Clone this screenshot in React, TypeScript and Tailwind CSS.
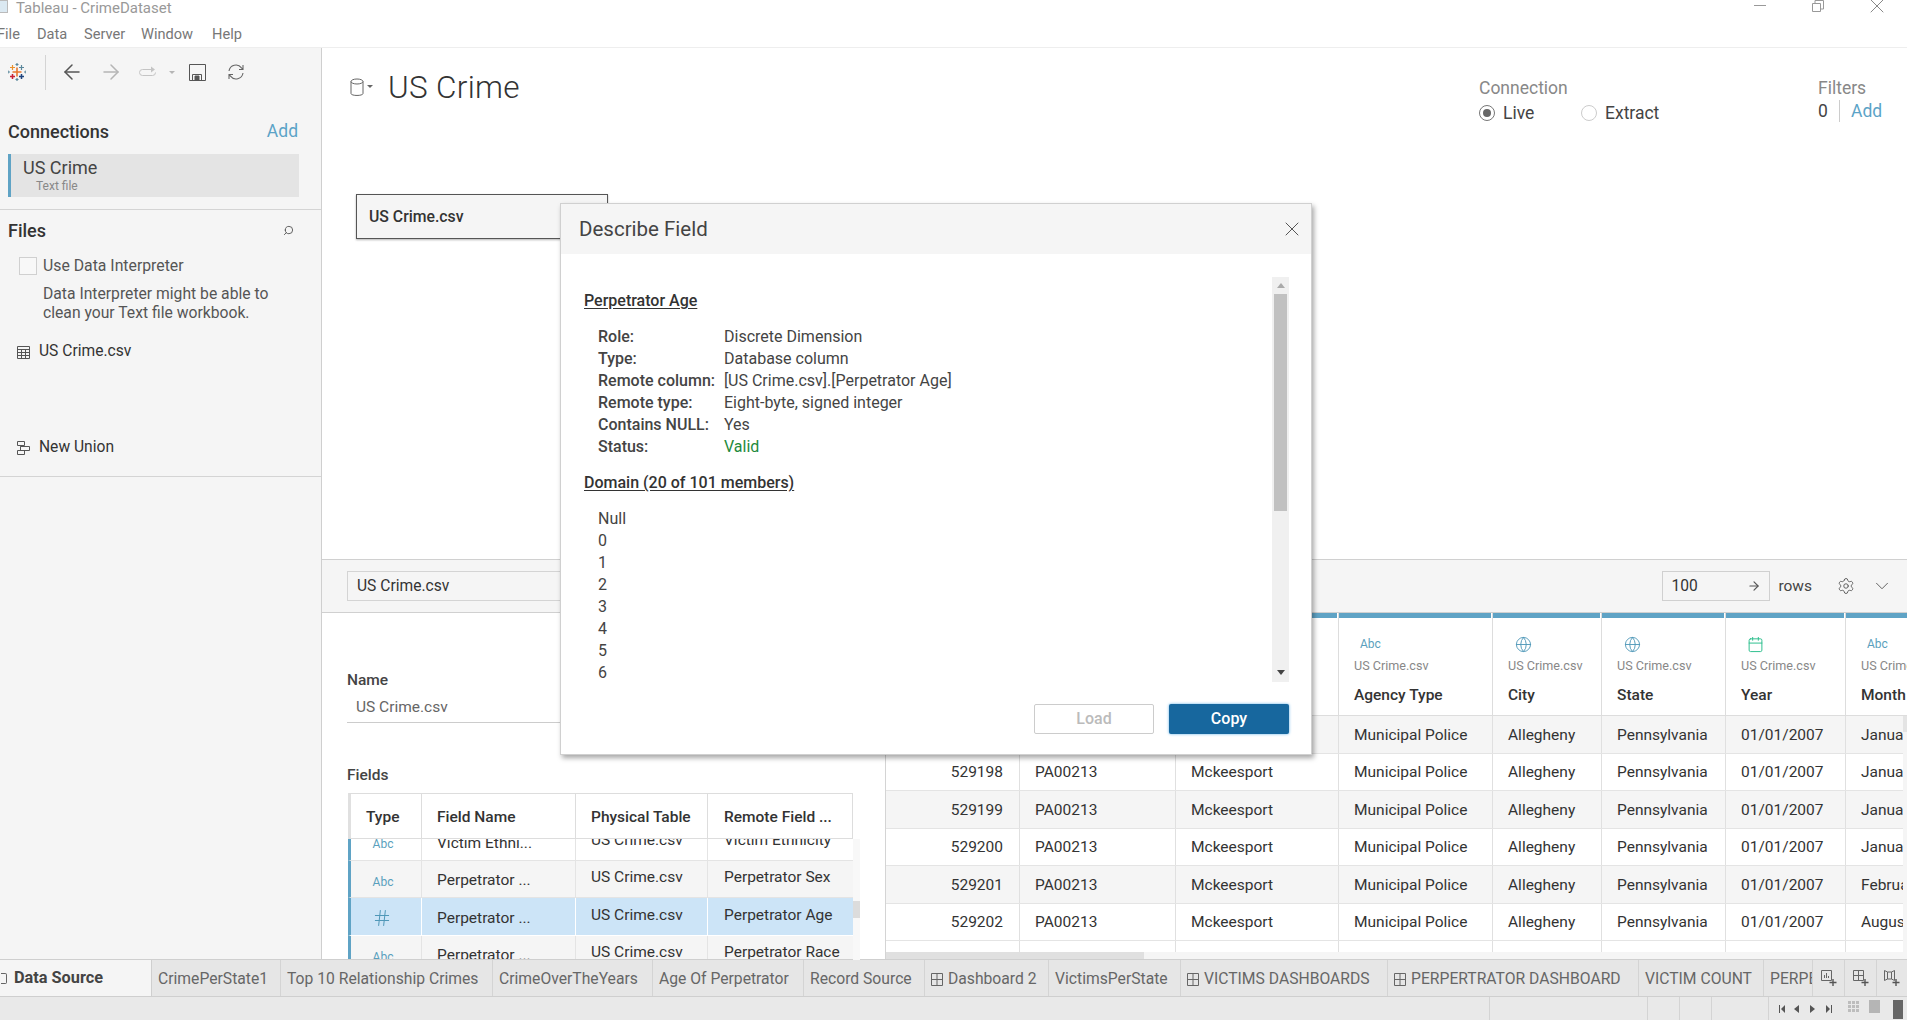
import { ArrowLeft, ArrowRight, Calendar, ChevronDown, Globe, Hash, Search, Settings, X } from "lucide-react";

const rows = [
  { id: "529197", code: "PA00213", name: "Mckeesport", month: "January" },
  { id: "529198", code: "PA00213", name: "Mckeesport", month: "January" },
  { id: "529199", code: "PA00213", name: "Mckeesport", month: "January" },
  { id: "529200", code: "PA00213", name: "Mckeesport", month: "January" },
  { id: "529201", code: "PA00213", name: "Mckeesport", month: "February" },
  { id: "529202", code: "PA00213", name: "Mckeesport", month: "August" },
];

const fields = [
  { type: "Abc", name: "Victim Ethni...", remote: "Victim Ethnicity", bg: "bg-white" },
  { type: "Abc", name: "Perpetrator ...", remote: "Perpetrator Sex", bg: "bg-[#f5f5f5]" },
  { type: "#", name: "Perpetrator ...", remote: "Perpetrator Age", bg: "bg-[#cce4f7]" },
  { type: "Abc", name: "Perpetrator ...", remote: "Perpetrator Race", bg: "bg-[#f5f5f5]" },
];

const details = [
  ["Role:", "Discrete Dimension"],
  ["Type:", "Database column"],
  ["Remote column:", "[US Crime.csv].[Perpetrator Age]"],
  ["Remote type:", "Eight-byte, signed integer"],
  ["Contains NULL:", "Yes"],
  ["Status:", "Valid"],
];

const members = ["Null", "0", "1", "2", "3", "4", "5", "6"];

const tabs = [
  { label: "CrimePerState1", w: "w-[129px]" },
  { label: "Top 10 Relationship Crimes", w: "w-[212px]" },
  { label: "CrimeOverTheYears", w: "w-[160px]" },
  { label: "Age Of Perpetrator", w: "w-[151px]" },
  { label: "Record Source", w: "w-[121px]" },
  { label: "Dashboard 2", w: "w-[124px]", dash: true },
  { label: "VictimsPerState", w: "w-[132px]" },
  { label: "VICTIMS DASHBOARDS", w: "w-[207px]", dash: true },
  { label: "PERPERTRATOR DASHBOARD", w: "w-[251px]", dash: true },
  { label: "VICTIM COUNT", w: "w-[125px]" },
  { label: "PERPETRATOR", w: "w-[49px]" },
];

const TableauLogo = () => (
  <svg width="18" height="18" viewBox="0 0 18 18" strokeWidth="1.2" fill="none">
    <path d="M9 4.5v9M4.5 9h9" stroke="#e8762d" strokeWidth="1.6" />
    <path d="M13.5 2v5M11 4.5h5" stroke="#5b879b" />
    <path d="M4.5 2v5M2 4.5h5" stroke="#eb912c" />
    <path d="M13.5 11v5M11 13.5h5" stroke="#1f447e" strokeWidth="1.5" />
    <path d="M4.5 11v5M2 13.5h5" stroke="#c72037" strokeWidth="1.5" />
    <path d="M9 0v3M7.5 1.5h3M9 15v3M7.5 16.5h3M0 7.5v3M0 9h2M16 9h2M18 7.5v3" stroke="#59879b" />
  </svg>
);

const SaveIcon = () => (
  <svg width="17" height="17" viewBox="0 0 17 17" fill="none" stroke="#555">
    <path d="M.5.5h16v16H.5z" />
    <path d="M3.5 16.5v-6h9v6" />
    <path d="M6 12h4v4H6z" fill="#555" />
  </svg>
);

const RefreshIcon = () => (
  <svg width="18" height="18" viewBox="0 0 18 18" fill="none" stroke="#666" strokeWidth="1.1">
    <path d="M2 8a7 7 0 0 1 12.5-3.2L16 6.5M16 2v4.5h-4" />
    <path d="M16 10a7 7 0 0 1-12.5 3.2L2 11.5M2 16v-4.5h4" />
  </svg>
);

const LoopIcon = () => (
  <svg width="19" height="12" viewBox="0 0 19 12" fill="none" stroke="#c4c4c4">
    <path d="M14 3.5H3.5a3 3 0 0 0 0 6h10a3 3 0 0 0 3-3" />
    <path d="M12 .5v6l4-3z" fill="#c4c4c4" stroke="none" />
  </svg>
);

const DbIcon = () => (
  <svg width="14" height="19" viewBox="0 0 14 19" fill="none" stroke="#666">
    <path d="M1 3.5v12c0 2.6 12 2.6 12 0v-12" />
    <ellipse cx="7" cy="3.5" rx="6" ry="2.5" />
  </svg>
);

const GridIcon = () => (
  <svg width="13" height="13" viewBox="0 0 13 13" fill="none" stroke="#555">
    <path d="M.5.5h12v12H.5zM.5 3.5h12M.5 6.5h12M.5 9.5h12M4.5 3.5v9M8.5 3.5v9" />
  </svg>
);

const UnionIcon = () => (
  <svg width="13" height="14" viewBox="0 0 13 14" fill="none" stroke="#555">
    <path d="M.5.5h7v4h-7zM3.5 4.5v1M3.5 5.5h9v4h-9zM.5 9.5h7v4h-7z" />
  </svg>
);

const DashIcon = () => (
  <svg width="12" height="13" viewBox="0 0 12 13" fill="none" stroke="#666" className="shrink-0">
    <path d="M.5.5h11v12H.5zM6 .5v12M.5 6.5h11" />
  </svg>
);

const NewTabIcon = ({ kind }: { kind: string }) => (
  <svg width="16" height="17" viewBox="0 0 16 17" fill="none" stroke="#666">
    {kind === "sheet" && <path d="M.5.5h10v10H.5zM3.5 8V5M5.5 8V3M7.5 8V6" />}
    {kind === "dash" && <path d="M.5.5h10v10H.5zM5.5.5v10M.5 5.5h10" />}
    {kind === "story" && <path d="M.5.5l3 1.5h4l3-1.5v10l-3-1.5h-4l-3 1.5zM3.5 2v7M7.5 2v7" />}
    <path d="M12 9v7M8.5 12.5h7" strokeWidth="1.4" stroke="#555" />
  </svg>
);

const Divider = () => <div className="h-px bg-[#d4d4d4]" />;

function Sidebar() {
  return (
    <aside className="w-[322px] shrink-0 bg-[#f5f5f5] border-r border-[#cfcfcf] flex flex-col text-[#333]">
      <div className="h-[48px] flex items-center pl-[8px]">
        <TableauLogo />
        <div className="ml-[19px] w-px h-[35px] bg-[#d4d4d4]" />
        <ArrowLeft size={24} strokeWidth={1.5} className="ml-[14px] text-[#555]" />
        <ArrowRight size={24} strokeWidth={1.5} className="ml-[15px] text-[#b5b5b5]" />
        <div className="ml-[16px]">
          <LoopIcon />
        </div>
        <div className="ml-[11px] w-0 h-0 border-x-[3px] border-x-transparent border-t-[3px] border-t-[#b5b5b5]" />
        <div className="ml-[14px]">
          <SaveIcon />
        </div>
        <div className="ml-[21px]">
          <RefreshIcon />
        </div>
      </div>
      <div className="mt-[25px] px-[8px] h-[20px] flex items-center justify-between pr-[23px]">
        <span className="text-[18px] font-medium">Connections</span>
        <span className="text-[17.5px] text-[#5ba3c7]">Add</span>
      </div>
      <div className="mt-[13px] ml-[8px] mr-[22px] h-[43px] bg-[#e4e4e4] border-l-[3px] border-[#5fa3c5] pl-[12px] pt-[3px]">
        <div className="text-[18px] leading-[22px] text-[#444]">US Crime</div>
        <div className="text-[12px] leading-[14px] pl-[13px] text-[#888]">Text file</div>
      </div>
      <div className="mt-[12px]">
        <Divider />
      </div>
      <div className="mt-[10px] px-[8px] pr-[27px] h-[20px] flex items-center justify-between">
        <span className="text-[18px] font-medium">Files</span>
        <Search size={11} className="-scale-x-100 text-[#555]" />
      </div>
      <div className="mt-[16px] pl-[19px] flex items-center">
        <div className="w-[18px] h-[18px] bg-[#f8f8f8] border border-[#d0d0d0]" />
        <span className="ml-[6px] text-[15.8px] leading-[20px] text-[#555]">Use Data Interpreter</span>
      </div>
      <p className="mt-[8px] pl-[43px] text-[15.7px] leading-[19px] text-[#555]">
        Data Interpreter might be able to
        <br />
        clean your Text file workbook.
      </p>
      <div className="mt-[20px] pl-[17px] flex items-center gap-[9px] h-[20px]">
        <GridIcon />
        <span className="text-[15.6px] text-[#333]">US Crime.csv</span>
      </div>
      <div className="mt-[76px] pl-[17px] flex items-center gap-[9px] h-[20px]">
        <UnionIcon />
        <span className="text-[15.6px] text-[#333]">New Union</span>
      </div>
      <div className="mt-[18px]">
        <Divider />
      </div>
    </aside>
  );
}

function Canvas() {
  return (
    <section className="flex-1 flex flex-col min-h-0">
      <div className="h-[146px] flex items-start shrink-0">
        <div className="ml-[28px] mt-[19px] flex items-center h-[40px]">
          <DbIcon />
          <div className="ml-[3px] -mt-[2px] w-0 h-0 border-x-[3px] border-x-transparent border-t-[3px] border-t-[#666]" />
          <h1 className="ml-[15px] pt-[2px] text-[31.5px] font-light text-[#333] tracking-[0.3px]">US Crime</h1>
        </div>
        <div className="ml-auto w-[339px] mt-[30px]">
          <div className="text-[17.5px] leading-[20px] text-[#888]">Connection</div>
          <div className="mt-[5px] flex items-center text-[17.5px] leading-[20px] text-[#444]">
            <div className="w-[16px] h-[16px] rounded-full border border-[#777] flex items-center justify-center">
              <div className="w-[8px] h-[8px] rounded-full bg-[#666]" />
            </div>
            <span className="ml-[8px] w-[78px]">Live</span>
            <div className="w-[16px] h-[16px] rounded-full border border-[#ccc]" />
            <span className="ml-[8px]">Extract</span>
          </div>
        </div>
        <div className="w-[89px] mt-[30px]">
          <div className="text-[17.5px] leading-[20px] text-[#888]">Filters</div>
          <div className="mt-[2px] flex items-center text-[17.5px] h-[22px]">
            <span className="text-[#444] w-[21px]">0</span>
            <div className="w-px h-[22px] bg-[#ccc]" />
            <span className="ml-[11px] text-[#5ba3c7]">Add</span>
          </div>
        </div>
      </div>
      <div className="ml-[34px] w-[252px] h-[45px] bg-[#f5f5f5] border border-[#555] shadow-[0_1px_2px_rgba(0,0,0,0.3)] flex items-center pl-[12px] pt-[1px] text-[15.8px] font-medium text-[#333]">
        US Crime.csv
      </div>
    </section>
  );
}

function FieldsPanel() {
  const line = (sel: boolean) => (sel ? "border-white" : "border-[#e4e4e4]");
  return (
    <div className="w-[564px] shrink-0 border-r border-[#d4d4d4] pl-[25px] pt-[57px] text-[#333]">
      <div className="text-[15.5px] leading-[20px] font-medium text-[#444]">Name</div>
      <div className="mt-[7px] w-[513px] h-[26px] border-b border-[#ccc] pl-[9px] text-[15.5px] leading-[20px] text-[#666]">
        US Crime.csv
      </div>
      <div className="mt-[42px] text-[15.5px] leading-[20px] font-medium text-[#444]">Fields</div>
      <div className="mt-[8px] ml-px w-[512px]">
        <div className="relative z-10 h-[46px] w-[505px] flex bg-white border border-[#ddd] border-l-[3px] border-l-[#e0e0e0] text-[15.5px] font-medium items-center">
          <div className="w-[71px] pl-[15px] pt-[4px] h-full flex items-center border-r border-[#ddd]">Type</div>
          <div className="w-[154px] pl-[15px] pt-[4px] h-full flex items-center border-r border-[#ddd]">Field Name</div>
          <div className="w-[132px] pl-[15px] pt-[4px] h-full flex items-center border-r border-[#ddd]">Physical Table</div>
          <div className="flex-1 pl-[16px] pt-[4px] h-full flex items-center">Remote Field ...</div>
        </div>
        <div className="flex h-[121px] overflow-hidden">
          <div className="w-[505px] -mt-[16px]">
            {fields.map((f, i) => {
              const sel = f.type === "#";
              return (
                <div key={i} className={`h-[37.5px] flex border-b ${line(sel)} border-l-[3px] border-l-[#5fa3c5] text-[15.5px] ${f.bg}`}>
                  <div className={`w-[71px] flex items-center justify-center pt-[6px] pr-[6px] border-r ${line(sel)}`}>
                    {sel ? (
                      <Hash size={20} strokeWidth={1.2} className="text-[#4f97b8] -mt-[3px] mr-[2px]" />
                    ) : (
                      <span className="text-[12px] text-[#5a9fbd]">Abc</span>
                    )}
                  </div>
                  <div className={`w-[154px] pl-[15px] pt-[4px] flex items-center border-r ${line(sel)}`}>{f.name}</div>
                  <div className={`w-[132px] pl-[15px] pb-[2px] flex items-center border-r ${line(sel)}`}>US Crime.csv</div>
                  <div className="flex-1 pl-[16px] pb-[2px] flex items-center whitespace-nowrap">{f.remote}</div>
                </div>
              );
            })}
          </div>
          <div className="w-[7px] bg-[#f8f8f8] relative">
            <div className="mt-[62px] h-[17px] bg-[#dcdcdc]" />
          </div>
        </div>
      </div>
    </div>
  );
}

const gridCols = ["w-[134px]", "w-[156px]", "w-[163px]", "w-[154px]", "w-[109px]", "w-[124px]", "w-[120px]", "w-[120px]"];

const headers = [
  { icon: "#", name: "Record ID" },
  { icon: "Abc", name: "Agency Code" },
  { icon: "Abc", name: "Agency Name" },
  { icon: "Abc", name: "Agency Type" },
  { icon: "globe", name: "City" },
  { icon: "globe", name: "State" },
  { icon: "cal", name: "Year" },
  { icon: "Abc", name: "Month" },
];

function HeaderIcon({ icon }: { icon: string }) {
  if (icon === "globe") return <Globe size={17} strokeWidth={1.3} className="text-[#4f97b8] ml-[7px]" />;
  if (icon === "cal") return <Calendar size={17} strokeWidth={1.4} className="text-[#2fbf8f] ml-[6px]" />;
  if (icon === "#") return <Hash size={14} strokeWidth={1.3} className="text-[#4f97b8] ml-[8px]" />;
  return <span className="ml-[6px] text-[12px] text-[#5a9fbd]">Abc</span>;
}

function DataGrid() {
  return (
    <div className="flex-1 flex flex-col min-w-0 overflow-hidden text-[15.5px] text-[#333]">
      <div className="flex h-[103px] shrink-0 border-b border-[#ddd]">
        {headers.map((h, i) => (
          <div key={h.name} className={`${gridCols[i]} shrink-0 h-full border-r border-[#ddd] flex flex-col`}>
            <div className="h-[5px] bg-[#5fa3c5] border-r border-white" />
            <div className="h-[20px] mt-[16px] flex items-center pl-[15px]">
              <HeaderIcon icon={h.icon} />
            </div>
            <div className="mt-[3px] pl-[15px] text-[12.6px] leading-[18px] text-[#888] whitespace-nowrap">US Crime.csv</div>
            <div className="mt-[10px] pl-[15px] leading-[20px] font-medium whitespace-nowrap">{h.name}</div>
          </div>
        ))}
      </div>
      <div className="flex flex-1 min-h-0">
        <div className="flex-1 min-w-0 overflow-hidden flex flex-col">
          {rows.map((r, i) => {
            const cells = [r.id, r.code, r.name, "Municipal Police", "Allegheny", "Pennsylvania", "01/01/2007", r.month];
            return (
              <div key={r.id} className={`flex h-[37.5px] shrink-0 border-b border-[#e4e4e4] ${i % 2 === 0 ? "bg-[#f5f5f5]" : "bg-white"}`}>
                {cells.map((c, j) => (
                  <div key={j} className={`${gridCols[j]} shrink-0 border-r border-[#e0e0e0] pt-[2px] flex items-center whitespace-nowrap overflow-hidden ${j === 0 ? "justify-end pr-[16px]" : "pl-[15px]"}`}>
                    {c}
                  </div>
                ))}
              </div>
            );
          })}
          <div className="flex h-[11px] shrink-0">
            {gridCols.map((c, j) => (
              <div key={j} className={`${c} shrink-0 border-r border-[#e0e0e0]`} />
            ))}
          </div>
        </div>
        <div className="w-[4px] shrink-0 bg-[#f5f5f5]">
          <div className="h-[16px] bg-[#e4e4e4]" />
        </div>
      </div>
      <div className="h-[7px] shrink-0 bg-[#f5f5f5]">
        <div className="w-[258px] h-full bg-[#e0e0e0]" />
      </div>
    </div>
  );
}

function BottomPanel() {
  return (
    <section className="h-[400px] shrink-0 flex flex-col">
      <div className="h-[54px] shrink-0 bg-[#f5f5f5] border-y border-[#d0d0d0] flex items-center pl-[25px]">
        <div className="w-[400px] h-[30px] border border-[#d4d4d4] flex items-center pl-[9px] pt-[2px] text-[15.6px] text-[#333]">US Crime.csv</div>
        <div className="ml-auto w-[108px] h-[30px] border border-[#d0d0d0] flex items-center justify-between pl-[8px] pr-[8px] text-[15.6px] text-[#333]">
          <span className="pt-[1px]">100</span>
          <ArrowRight size={14} className="text-[#555]" />
        </div>
        <span className="ml-[8px] pt-[1px] text-[15.5px] text-[#444]">rows</span>
        <Settings size={18} strokeWidth={1.2} className="ml-[25px] text-[#555]" />
        <ChevronDown size={22} strokeWidth={1} className="ml-[16px] mr-[14px] text-[#555]" />
      </div>
      <div className="flex-1 flex min-h-0">
        <FieldsPanel />
        <DataGrid />
      </div>
    </section>
  );
}

function DescribeDialog() {
  return (
    <div className="absolute z-20 left-[560px] top-[203px] w-[752px] h-[552px] bg-white border border-[#d0d0d0] shadow-[2px_3px_5px_rgba(0,0,0,0.35)] flex flex-col text-[16px] text-[#444]">
      <div className="h-[50px] shrink-0 bg-[#f5f5f5] flex items-center justify-between pl-[18px] pr-[7px]">
        <span className="text-[20.5px] text-[#444]">Describe Field</span>
        <X size={24} strokeWidth={1} className="text-[#555]" />
      </div>
      <div className="flex mt-[23px] pr-[22px] h-[405px]">
        <div className="flex-1 pl-[23px] pt-[14px]">
          <div className="font-medium underline underline-offset-2 leading-[20px] text-[#333]">Perpetrator Age</div>
          <div className="mt-[15px] pl-[14px]">
            {details.map(([k, v]) => (
              <div key={k} className="flex h-[22px] items-center">
                <span className="w-[126px] font-medium text-[#444]">{k}</span>
                <span className={v === "Valid" ? "text-[#1e8a3c]" : "text-[#444]"}>{v}</span>
              </div>
            ))}
          </div>
          <div className="mt-[15px] font-medium underline underline-offset-2 leading-[20px] text-[#333]">Domain (20 of 101 members)</div>
          <div className="mt-[15px] pl-[14px]">
            {members.map((m) => (
              <div key={m} className="h-[22px] flex items-center">{m}</div>
            ))}
          </div>
        </div>
        <div className="w-[17px] bg-[#f0f0f0] flex flex-col items-center pt-[6px]">
          <div className="w-0 h-0 border-x-[4px] border-x-transparent border-b-[5px] border-b-[#aaa]" />
          <div className="mt-[6px] w-[13px] h-[217px] bg-[#c1c1c1]" />
          <div className="mt-auto mb-[7px] w-0 h-0 border-x-[4px] border-x-transparent border-t-[5px] border-t-[#444]" />
        </div>
      </div>
      <div className="mt-[22px] flex justify-end gap-[15px] pr-[22px]">
        <div className="w-[120px] h-[30px] border border-[#ccc] rounded-[2px] flex items-center justify-center font-medium text-[#bbb]">Load</div>
        <div className="w-[120px] h-[30px] bg-[#17679e] rounded-[2px] shadow-[0_0_3px_#5fb0e8] flex items-center justify-center font-medium text-white">Copy</div>
      </div>
    </div>
  );
}

function TabBar() {
  return (
    <div className="h-[38px] shrink-0 flex border-y border-[#cfcfcf] bg-[#e6e6e6] text-[15.7px] text-[#666] overflow-hidden">
      <div className="w-[152px] shrink-0 bg-[#f5f5f5] flex items-center pl-[1px] border-r border-[#cfcfcf]">
        <div className="w-[6px] h-[11px] border border-[#666] border-l-0 rounded-r-[2px]" />
        <span className="ml-[7px] pt-[1px] text-[16.3px] font-bold text-[#444]">Data Source</span>
      </div>
      {tabs.map((t) => (
        <div key={t.label} className={`${t.w} shrink-0 flex items-center gap-[5px] pl-[6px] pt-[2px] border-r border-[#d4d4d4] overflow-hidden whitespace-nowrap`}>
          {t.dash && <DashIcon />}
          {t.label}
        </div>
      ))}
      <div className="w-[32px] shrink-0 flex items-center justify-center border-r border-[#d4d4d4]">
        <NewTabIcon kind="sheet" />
      </div>
      <div className="w-[32px] shrink-0 flex items-center justify-center border-r border-[#d4d4d4]">
        <NewTabIcon kind="dash" />
      </div>
      <div className="flex-1 flex items-center justify-center">
        <NewTabIcon kind="story" />
      </div>
    </div>
  );
}

function StatusBar() {
  return (
    <div className="flex-1 bg-[#e9e9e9] flex">
      <div className="w-[1490px] shrink-0 border-r border-[#d4d4d4]" />
      <div className="w-[158px] shrink-0 border-r border-[#d4d4d4]" />
      <div className="w-[32px] shrink-0 border-r border-[#d4d4d4]" />
      <div className="w-[32px] shrink-0 border-r border-[#d4d4d4]" />
      <div className="w-[57px] shrink-0 border-r border-[#d4d4d4]" />
      <div className="flex-1 flex items-center pl-[9px]">
        <svg width="56" height="10" viewBox="0 0 56 10" fill="#555">
          <path d="M1 1h1v8H1zM7 1v8L3 5zM21 1v8l-5-4zM32 1v8l5-4zM48 1v8l4-4zM53 1h1v8h-1z" />
        </svg>
        <svg width="60" height="22" viewBox="0 0 60 22" className="ml-[14px]">
          <path d="M0 3h3v3H0zM4 3h3v3H4zM8 3h3v3H8zM0 7h3v3H0zM4 7h3v3H4zM8 7h3v3H8zM0 11h3v3H0zM4 11h3v3H4zM8 11h3v3H8z" fill="#bdbdbd" />
          <path d="M21 2h11v13H21z" fill="#b5b5b5" />
          <path d="M45 2h10v19H45z" fill="#666" />
        </svg>
      </div>
    </div>
  );
}

export default function App() {
  return (
    <div className="relative w-[1907px] h-[1020px] overflow-hidden bg-white flex flex-col [font-family:Roboto,sans-serif]">
      <div className="h-[47px] shrink-0 relative text-[#888]">
        <div className="h-[15px] pl-[16px] flex items-center text-[15px] pt-[1px] text-[#999]">
          <div className="absolute -left-[3px] top-0 w-[11px] h-[13px] border border-[#bbb] bg-[#dbe9f2]" />
          Tableau - CrimeDataset
        </div>
        <nav className="mt-[10px] flex h-[20px] items-center text-[14.6px] text-[#777] -ml-[3px]">
          <span className="w-[40px]">File</span>
          <span className="w-[47px]">Data</span>
          <span className="w-[57px]">Server</span>
          <span className="w-[71px]">Window</span>
          <span>Help</span>
        </nav>
        <div className="absolute right-[18px] top-[0px] flex items-start">
          <div className="mt-[5px] w-[12px] h-px bg-[#999]" />
          <svg width="12" height="12" viewBox="0 0 12 12" fill="none" stroke="#999" className="ml-[46px]">
            <path d="M.5 3.5h8v8h-8zM3 3V.5h8.5V9H9" />
          </svg>
          <X size={24} strokeWidth={1} className="ml-[41px] -mt-[6px] text-[#888]" />
        </div>
      </div>
      <div className="h-px shrink-0 bg-[#eeeeee]" />
      <div className="h-[911px] shrink-0 flex min-h-0">
        <Sidebar />
        <main className="flex-1 flex flex-col min-w-0">
          <Canvas />
          <BottomPanel />
        </main>
      </div>
      <TabBar />
      <StatusBar />
      <DescribeDialog />
    </div>
  );
}
